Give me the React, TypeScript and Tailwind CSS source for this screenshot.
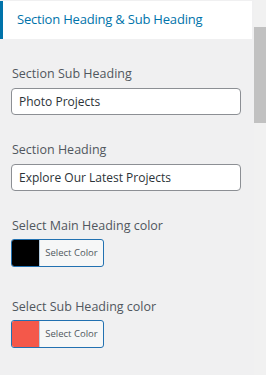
export default function App() {
  const fields = [
    { label: "Section Sub Heading", value: "Photo Projects" },
    { label: "Section Heading", value: "Explore Our Latest Projects" },
  ];
  const colors = [
    { label: "Select Main Heading color", swatch: "bg-[#000000]" },
    { label: "Select Sub Heading color", swatch: "bg-[#f4584a]" },
  ];

  return (
    <div className="relative h-[375px] w-[266px] overflow-hidden bg-[#f0f0f1] font-['Open_Sans',sans-serif]">
      <div className="mt-px flex h-[38px] w-[252px] items-center border-l-[3px] border-[#0073aa] bg-white pl-[14px]">
        <span className="text-[13px] tracking-[-0.2px] text-[#0073aa]">Section Heading &amp; Sub Heading</span>
      </div>

      <div className="flex w-[254px] flex-col px-[11px] pt-[26px]">
        {fields.map((f) => (
          <div key={f.label} className="mb-[26px] flex flex-col">
            <label className="mb-[5px] pl-px text-[12.5px] leading-[18px] text-[#50575e]">
              {f.label}
            </label>
            <div className="flex h-[27px] w-[230px] items-center rounded-[4px] border border-[#8c8f94] bg-white px-[7px] text-[12px] text-[#2c3338]">
              {f.value}
            </div>
          </div>
        ))}

        {colors.map((c) => (
          <div key={c.label} className="mb-[31px] flex flex-col">
            <label className="mb-[4px] pl-px text-[12.5px] leading-[18px] text-[#50575e]">
              {c.label}
            </label>
            <div className="flex h-[28px] w-[93px] overflow-hidden rounded-[3px] border border-[#2271b1] bg-[#f6f7f7]">
              <span className={`w-[27px] ${c.swatch}`} />
              <span className="flex flex-1 items-center justify-center border-l border-[#2271b1]/30 text-[9.5px] text-[#50575e]">
                Select Color
              </span>
            </div>
          </div>
        ))}
      </div>

      <div className="absolute right-0 top-0 h-full w-[12px] bg-[#f1f1f1]">
        <div className="mt-[27px] h-[96px] w-full bg-[#c1c1c1]" />
      </div>
    </div>
  );
}
